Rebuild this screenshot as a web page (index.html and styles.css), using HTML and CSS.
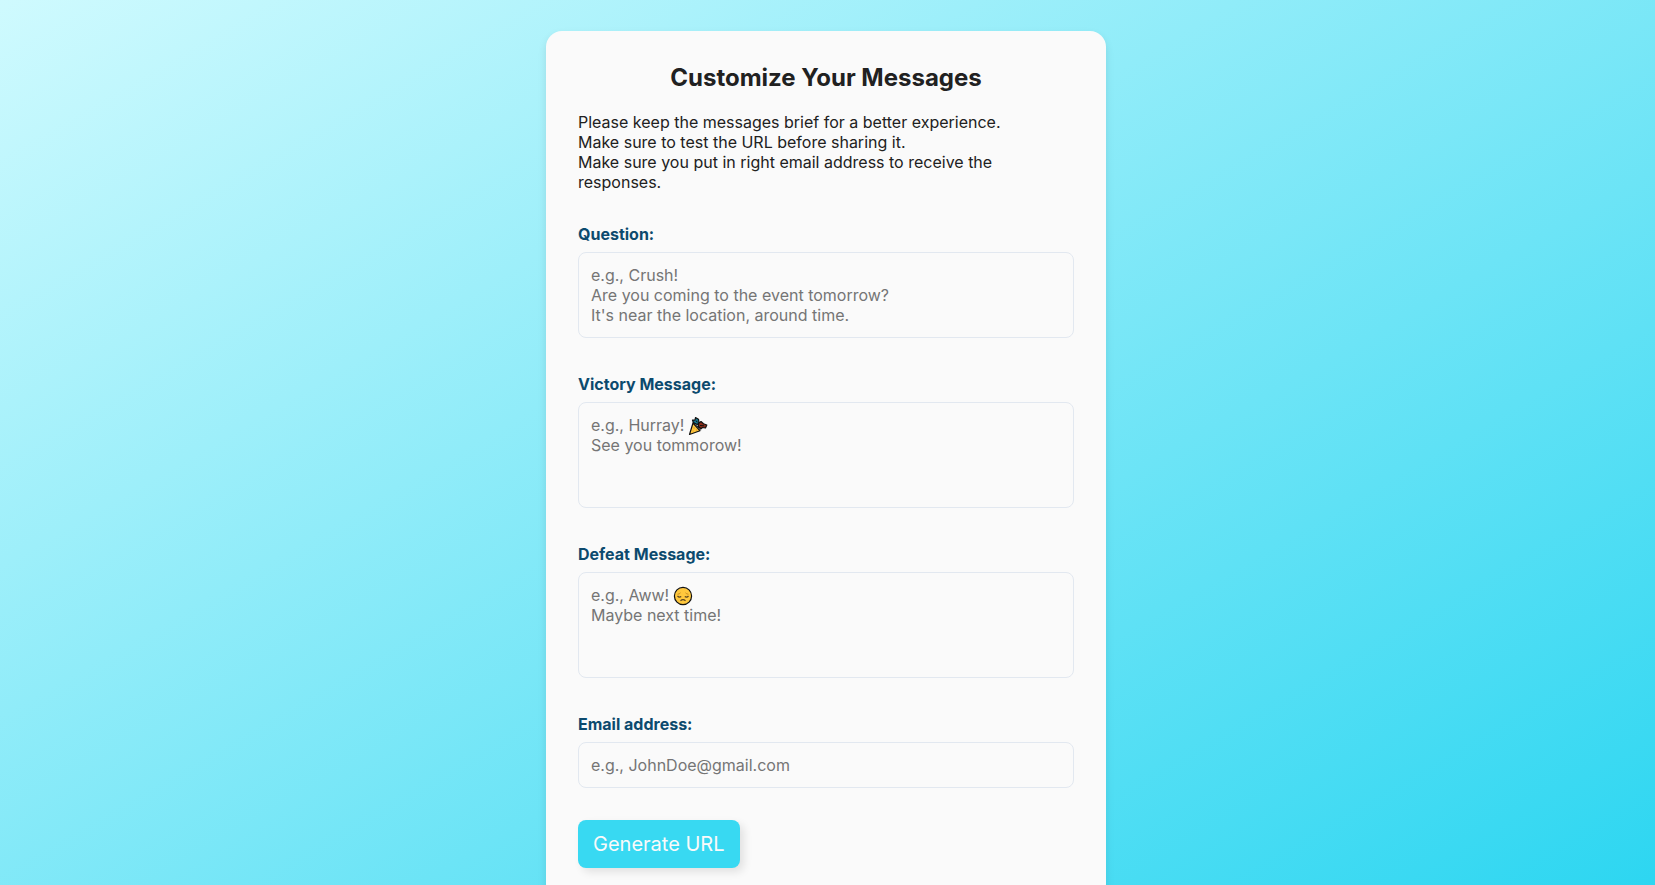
FILE: index.html
```html
<!DOCTYPE html>
<html lang="en">
<head>
<meta charset="utf-8">
<meta name="viewport" content="width=device-width, initial-scale=1">
<title>Customize Your Messages</title>
<link rel="stylesheet" href="styles.css">
</head>
<body>
<main class="card">
  <h1 class="title">Customize Your Messages</h1>
  <p class="intro">Please keep the messages brief for a better experience.<br>Make sure to test the URL before sharing it.<br>Make sure you put in right email address to receive the responses.</p>
  <form class="form">
    <div class="field">
      <label for="question">Question:</label>
      <textarea class="control" id="question" rows="3" placeholder="e.g., Crush!&#10;Are you coming to the event tomorrow?&#10;It's near the location, around time."></textarea>
    </div>
    <div class="field">
      <label for="victory">Victory Message:</label>
      <div class="control-wrap">
        <textarea class="control" id="victory" rows="4" placeholder="e.g., Hurray!&#10;See you tommorow!"></textarea>
        <svg class="emoji emoji-party" viewBox="0 0 20 20" aria-hidden="true">
          <path d="M5 7 1.500 18.500 12 14.800z" fill="#ffc83d" stroke="#111" stroke-width="1.200" stroke-linejoin="round"/>
          <path d="M5.500 7 4.500 4 7 4.200 7.500 1.500 10.500 3.200 11 6.500 9.500 8.500z" fill="#16758c" stroke="#111" stroke-width="1.200" stroke-linejoin="round"/>
          <path d="M10.500 7.500 13 5.500 15.500 7.800 18.800 9 17.500 12 14.500 11.500 13 12.800 10.500 10.500z" fill="#8c2b17" stroke="#111" stroke-width="1.200" stroke-linejoin="round"/>
          <path d="M6.500 6.500 12.500 14.200M12 9.500 16 9.800M8 5l1.500 1" fill="none" stroke="#111" stroke-width="1"/>
          <path d="M5.500 12h1.200M8 14h1.200M4.500 15h1" stroke="#d98b28" stroke-width="1"/>
        </svg>
      </div>
    </div>
    <div class="field">
      <label for="defeat">Defeat Message:</label>
      <div class="control-wrap">
        <textarea class="control" id="defeat" rows="4" placeholder="e.g., Aww!&#10;Maybe next time!"></textarea>
        <svg class="emoji emoji-sad" viewBox="0 0 20 20" aria-hidden="true">
          <circle cx="10" cy="10" r="8.600" fill="#ffc83d" stroke="#111" stroke-width="1.200"/>
          <path d="M4.500 8.300Q6.500 8 7.500 6.800M15.500 8.300Q13.500 8 12.500 6.800" fill="none" stroke="#c98a22" stroke-width="1"/>
          <path d="M4.500 10Q6.200 12 8.200 10.500M15.500 10Q13.800 12 11.800 10.500M7.500 14.800Q10 12.500 12.500 14.800" fill="none" stroke="#5a4420" stroke-width="1.200"/>
        </svg>
      </div>
    </div>
    <div class="field">
      <label for="email">Email address:</label>
      <input class="control" id="email" type="email" placeholder="e.g., JohnDoe@gmail.com">
    </div>
    <button class="submit" type="submit">Generate URL</button>
  </form>
</main>
</body>
</html>
```
FILE: styles.css
```css
* {
  box-sizing: border-box;
}

html {
  min-height: 100%;
  background: linear-gradient(150deg, #cffafe, #2dd6f1) fixed;
}

body {
  margin: 0;
  padding: 31px 19px 31px 16px;
  font: 16px/20px Inter, sans-serif;
  color: #212121;
}

.card {
  max-width: 560px;
  margin: 0 auto;
  padding: 32px;
  border-radius: 16px;
  background: #fafafa;
  box-shadow: 0 4px 8px rgba(0, 0, 0, 0.1);
}

.title {
  margin: 0 0 20px;
  font-size: 24px;
  line-height: 29px;
  font-weight: 700;
  text-align: center;
}

.intro {
  margin: 0 0 32px;
}

.form {
  display: flex;
  flex-direction: column;
  gap: 36px;
}

.field {
  display: flex;
  flex-direction: column;
  gap: 8px;
}

.field label {
  font-weight: 700;
  color: #0c4a6e;
}

.control-wrap {
  position: relative;
}

.control {
  display: block;
  width: 100%;
  padding: 12px;
  border: 1px solid #e2e8f0;
  border-radius: 8px;
  background: transparent;
  font: inherit;
  color: inherit;
  resize: none;
}

.control::placeholder {
  color: #757575;
}

.emoji {
  position: absolute;
  width: 20px;
  height: 20px;
  pointer-events: none;
}

.emoji-party {
  top: 14px;
  left: 110px;
}

.emoji-sad {
  top: 14px;
  left: 95px;
}

.submit {
  align-self: flex-start;
  margin-top: -4px;
  padding: 12px 15px;
  border: 0;
  border-radius: 8px;
  background: #38d9f2;
  box-shadow: 4px 4px 8px rgba(0, 0, 0, 0.1);
  font: 20px/24px Inter, sans-serif;
  color: #fafafa;
}
```
